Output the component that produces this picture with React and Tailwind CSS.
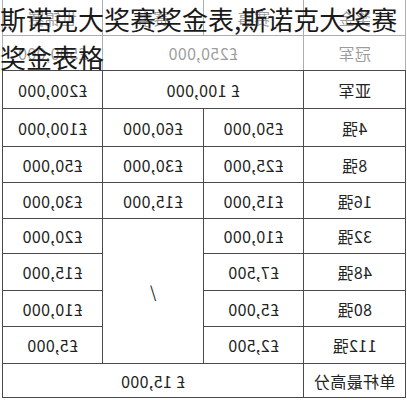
import React from "react";

const F = { fontFamily: '"Noto Sans CJK SC", "Noto Sans", sans-serif' };

function Cell({ children, className = "" }) {
  return (
    <div className={"bg-white flex items-center justify-center text-[16px] tracking-[0.4px] text-[#222] " + className}>
      {children}
    </div>
  );
}

export default function App() {
  return (
    <div className="relative w-[407px] h-[400px] overflow-hidden bg-white" style={F}>
      <div className="-mt-px ml-[2px] w-[404px] -scale-x-100">
        <div className="grid grid-cols-[101px_99px_100px_99px] grid-rows-[35px_34px_37px_37px_35px_35px_34px_36px_35px_36px_33px] gap-px p-px bg-[#4a4a4a]">
          <Cell>奖金</Cell>
          <Cell>赛事</Cell>
          <Cell>赛事</Cell>
          <Cell>世锦赛</Cell>

          <Cell>冠军</Cell>
          <Cell className="col-span-2">£250,000</Cell>
          <Cell>£500,000</Cell>

          <Cell>亚军</Cell>
          <Cell className="col-span-2">£ 100,000</Cell>
          <Cell>£200,000</Cell>

          <Cell>4强</Cell>
          <Cell>£50,000</Cell>
          <Cell>£60,000</Cell>
          <Cell>£100,000</Cell>

          <Cell>8强</Cell>
          <Cell>£25,000</Cell>
          <Cell>£30,000</Cell>
          <Cell>£50,000</Cell>

          <Cell>16强</Cell>
          <Cell>£15,000</Cell>
          <Cell>£15,000</Cell>
          <Cell>£30,000</Cell>

          <Cell>32强</Cell>
          <Cell>£10,000</Cell>
          <Cell className="row-span-4">/</Cell>
          <Cell>£20,000</Cell>

          <Cell>48强</Cell>
          <Cell>£7,500</Cell>
          <Cell>£15,000</Cell>

          <Cell>80强</Cell>
          <Cell>£5,000</Cell>
          <Cell>£10,000</Cell>

          <Cell>112强</Cell>
          <Cell>£2,500</Cell>
          <Cell>£5,000</Cell>

          <Cell>单杆最高分</Cell>
          <Cell className="col-span-3">£ 15,000</Cell>
        </div>
      </div>
      <div className="absolute left-0 top-0 w-[407px] h-[70px] bg-white/55"></div>
      <div className="absolute left-0 top-0 w-[402px] text-[26px] leading-[38px] text-[#1a1a1a]">
        斯诺克大奖赛奖金表,斯诺克大奖赛奖金表格
      </div>
    </div>
  );
}
